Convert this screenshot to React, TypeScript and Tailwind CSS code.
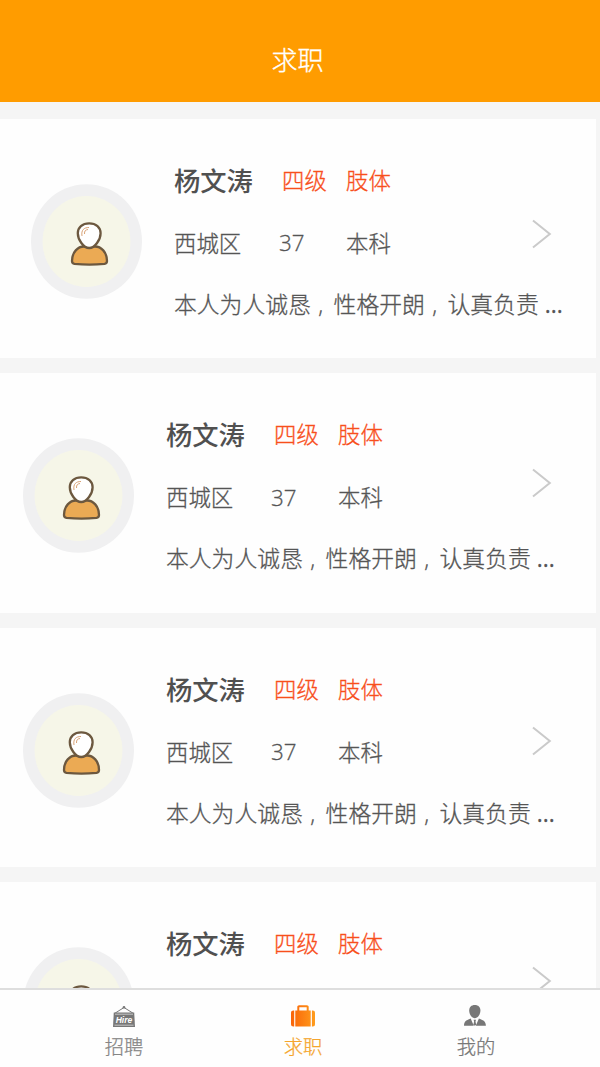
import React from "react";
import clsx from "clsx";

type Candidate = { id: number; inset: string; chevron: string };

const candidates: Candidate[] = [
  { id: 1, inset: "pl-[31px]", chevron: "mt-[99px]" },
  { id: 2, inset: "pl-[23px]", chevron: "mt-[94px]" },
  { id: 3, inset: "pl-[23px]", chevron: "mt-[97px]" },
  { id: 4, inset: "pl-[23px]", chevron: "mt-[83px]" },
];

function Avatar() {
  return (
    <svg className="mt-[65px] h-[115px] w-[111px] shrink-0" viewBox="0 0 111 115">
      <ellipse cx="55.5" cy="57.5" rx="55.5" ry="57.3" fill="#f0f0f1" />
      <ellipse cx="55.5" cy="57.5" rx="44" ry="45.5" fill="#f6f6e8" />
      <path
        d="M41 77C41 68 47 62.500 53 62.500H64C70 62.500 76 68 76 77C76 79 75.500 79.500 73.500 79.800Q58.500 81.300 43.500 79.800C41.500 79.500 41 79 41 77Z"
        fill="#ebaa54"
        stroke="#6c583f"
        strokeWidth="2.300"
      />
      <path
        d="M58.200 39.300C51.300 39.300 46.800 43.300 46.800 49.200C46.800 55.500 52.500 64 58.200 64S69.600 55.500 69.600 49.200C69.600 43.300 65.100 39.300 58.200 39.300Z"
        fill="#fff"
        stroke="#6c583f"
        strokeWidth="2.300"
      />
      <path d="M51 52C50 46 53 43.500 58 43.500M53.500 50C53.300 47 54.500 45.800 57 45.500" fill="none" stroke="#d9a275" strokeWidth="1" />
    </svg>
  );
}

function Comma() {
  return <span className="inline-block w-[22.8px] pl-[7.5px]">,</span>;
}

function CandidateCard({ inset, chevron }: Candidate) {
  return (
    <article className={clsx("flex h-[239.5px] w-[596px] shrink-0 items-start bg-[#fefefe]", inset)}>
      <Avatar />
      <div className="ml-[32px] w-[358px] shrink-0 whitespace-nowrap pt-[32px] font-light text-[#555] [-webkit-text-stroke:0.3px_currentColor]">
        <div className="grid h-[62px] grid-cols-[108px_64px_1fr] items-center text-[22.400px] text-[#f84f1c]">
          <h2 className="text-[26.300px] font-medium text-[#505050] [-webkit-text-stroke:0px]">杨文涛</h2>
          <span className="-mt-[2px]">四级</span>
          <span className="-mt-[2px]">肢体</span>
        </div>
        <div className="grid h-[62px] grid-cols-[105px_67px_1fr] items-center text-[22.400px]">
          <span>西城区</span>
          <span className="-mt-px">37</span>
          <span>本科</span>
        </div>
        <p className="h-[62px] w-[390px] whitespace-pre text-[22.800px] leading-[60px]">
          本人为人诚恳<Comma />性格开朗<Comma />认真负责 <span className="font-normal">...</span>
        </p>
      </div>
      <svg className={clsx("h-[32px] w-[20px] shrink-0", chevron, inset === "pl-[23px]" && "ml-[8px]")} viewBox="0 0 20 32" fill="none">
        <path d="m1 2.500 16.800 13.500L1 29.500" stroke="#cacaca" strokeWidth="2" />
      </svg>
    </article>
  );
}

function HireIcon() {
  return (
    <svg className="h-6 w-6" viewBox="0 0 24 24">
      <path d="M2.500 8.500 12 2.500l9.500 6" fill="none" stroke="#777" strokeWidth="1" />
      <circle cx="12" cy="2.300" r="1.300" fill="#777" />
      <path d="M1.800 7.500h20.400l.8 14.500H1Z" fill="#777" />
      <path d="M3 9.200h18M2.500 20.200h19" stroke="#d9d9d9" strokeWidth=".8" />
      <text x="12" y="18" textAnchor="middle" fill="#fff" fontSize="8.500" fontWeight="700" fontStyle="italic" fontFamily="Liberation Sans, sans-serif">Hire</text>
    </svg>
  );
}

function BriefcaseIcon() {
  return (
    <svg className="h-6 w-6" viewBox="0 0 24 24">
      <defs>
        <linearGradient id="case" x1="1" y1="0" x2="0" y2="0">
          <stop stopColor="#ff9c1c" />
          <stop offset="1" stopColor="#f96308" />
        </linearGradient>
      </defs>
      <path
        d="M2.500 5.500H3.200V21.500H2.500C.8 21.500 0 20.700 0 19V8C0 6.300.8 5.500 2.500 5.500ZM4.300 5.500H6.300V2C6.300.9 7 .2 8.100.2H15.900C17 .2 17.700.9 17.700 2V5.500H19.700V21.500H4.300ZM8.300 2.200V5.500H15.700V2.200ZM20.900 5.500H21.700C23.300 5.500 24 6.300 24 8V19C24 20.700 23.300 21.500 21.700 21.500H20.900Z"
        fill="url(#case)"
        fillRule="evenodd"
      />
    </svg>
  );
}

function PersonIcon() {
  return (
    <svg className="h-6 w-6" viewBox="0 0 24 24" fill="#777">
      <path d="M10.800 0C14.300 0 16.400 2.200 16.400 5.500C16.400 9.500 13.700 13.200 10.800 13.200S5.200 9.500 5.200 5.500C5.200 2.200 7.300 0 10.800 0Z" />
      <path d="M6.700 13.500 9.800 20.800H0C.1 16.500 1.500 15.500 6.700 13.500ZM14.900 13.500 11.800 20.800H21.900C21.800 16.500 20.100 15.500 14.900 13.500ZM9.600 14.800H12L11.500 16.500 12.200 19.800 10.800 20.800 9.400 19.800 10.100 16.500Z" />
    </svg>
  );
}

function Tab({ icon, label, className }: { icon: React.ReactNode; label: string; className: string }) {
  return (
    <a className={clsx("flex flex-col items-center pt-[15px] text-[19.300px] font-light [-webkit-text-stroke:0.25px_currentColor]", className)}>
      {icon}
      <span className="mt-[4px] leading-7">{label}</span>
    </a>
  );
}

export default function App() {
  return (
    <div className="flex h-[1067px] w-[600px] flex-col overflow-hidden bg-[#f5f5f5] font-['Open_Sans','Noto_Sans_CJK_SC',sans-serif]">
      <header className="flex h-[102px] shrink-0 items-center justify-center bg-[#ff9c00] pr-[5px] pt-[19px] text-[26px] font-light text-white">
        <h1 className="[-webkit-text-stroke:0.3px_currentColor]">求职</h1>
      </header>
      <main className="flex min-h-0 flex-1 flex-col gap-[15px] overflow-hidden pt-[16.500px]">
        {candidates.map((item) => (
          <CandidateCard key={item.id} {...item} />
        ))}
      </main>
      <nav className="grid h-[79px] shrink-0 grid-cols-[248px_110px_236px] border-t-2 border-[#dedede] bg-[#fefefe] [&_svg_text]:[-webkit-text-stroke:0px]">
        <Tab icon={<HireIcon />} label="招聘" className="text-[#858585]" />
        <Tab icon={<BriefcaseIcon />} label="求职" className="text-[#f5a52c]" />
        <Tab icon={<PersonIcon />} label="我的" className="text-[#777]" />
      </nav>
    </div>
  );
}
